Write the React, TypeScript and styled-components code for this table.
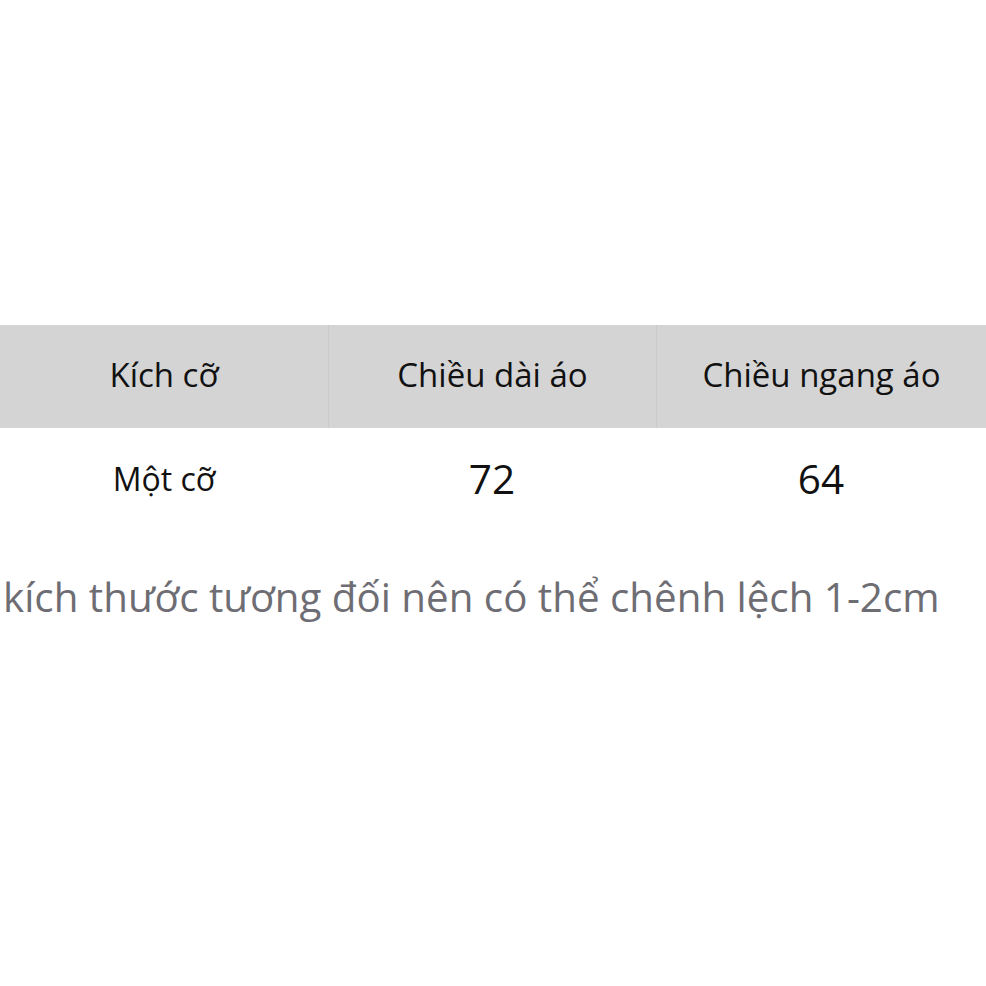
import React from 'react';
import styled, { createGlobalStyle } from 'styled-components';

const GlobalStyle = createGlobalStyle`
    html, body {
        margin: 0;
        padding: 0;
        background: #ffffff;
    }
    body {
        font-family: "Open Sans", "Noto Sans", sans-serif;
    }
`;

const Page = styled.div`
    width: 986px;
    height: 986px;
    display: flex;
    flex-direction: column;
    padding-top: 325px;
    box-sizing: border-box;
`;

const Table = styled.div`
    display: grid;
    grid-template-columns: 328px 328px 1fr;
    width: 986px;
`;

const HeadCell = styled.div<{ $divider?: boolean }>`
    height: 103px;
    padding-bottom: 5px;
    box-sizing: border-box;
    background: #d4d4d4;
    display: flex;
    align-items: center;
    justify-content: center;
    font-size: 33px;
    color: #111111;
    border-left: ${({ $divider }) => ($divider ? '1px solid #cacaca' : 'none')};
`;

const BodyCell = styled.div<{ $big?: boolean }>`
    height: 100px;
    display: flex;
    align-items: center;
    justify-content: center;
    font-size: ${({ $big }) => ($big ? '40.5px' : '32px')};
    color: #111111;
`;

const Note = styled.p`
    margin: 41px 0 0 3px;
    font-size: 40.3px;
    color: #6e6d73;
    white-space: nowrap;
`;

const headers = ['Kích cỡ', 'Chiều dài áo', 'Chiều ngang áo'];

const App: React.FC = () => {
    return (
        <>
            <GlobalStyle />
            <Page>
                <Table>
                    {headers.map((h, i) => (
                        <HeadCell key={h} $divider={i > 0}>{h}</HeadCell>
                    ))}
                    <BodyCell>Một cỡ</BodyCell>
                    <BodyCell $big>72</BodyCell>
                    <BodyCell $big>64</BodyCell>
                </Table>
                <Note>kích thước tương đối nên có thể chênh lệch 1-2cm</Note>
            </Page>
        </>
    );
};

export default App;
